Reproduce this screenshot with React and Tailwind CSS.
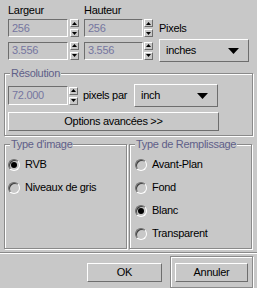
import React from 'react';

const raised = 'border border-t-white border-l-white border-b-[#6e6e6e] border-r-[#6e6e6e]';
const sunken = 'border border-t-[#6e6e6e] border-l-[#6e6e6e] border-b-white border-r-white';

function Field({ value, className }) {
  return (
    <div className={`${sunken} ${className} flex items-center pl-[3px] text-[#7676a0]`}>
      {value}
    </div>
  );
}

function Arrow({ up }) {
  return (
    <div className={`${raised} w-[9px] h-[8px] flex items-center justify-center`}>
      <svg width="5" height="3" viewBox="0 0 5 3">
        <polygon points={up ? '0,3 5,3 2.5,0' : '0,0 5,0 2.5,3'} fill="#000" />
      </svg>
    </div>
  );
}

function Spin({ className = '' }) {
  return (
    <div className={`flex flex-col gap-[2px] ${className}`}>
      <Arrow up />
      <Arrow />
    </div>
  );
}

function Select({ label, className }) {
  return (
    <div className={`${raised} ${className} flex items-center justify-between pl-[6px] pr-[9px]`}>
      <span>{label}</span>
      <svg width="11" height="6" viewBox="0 0 11 6">
        <polygon points="0,0 11,0 5.5,6" fill="#000" />
      </svg>
    </div>
  );
}

function Group({ title, className, children }) {
  return (
    <div className={`relative border border-[#8a8a8a] shadow-[inset_1px_1px_0_#fff,1px_1px_0_#fff] ${className}`}>
      <span className="absolute top-[-8px] left-[5px] px-[1px] bg-[#c8c8c8] leading-[14px] text-[#606088]">
        {title}
      </span>
      {children}
    </div>
  );
}

function Radio({ label, checked }) {
  return (
    <div className="h-[23px] flex items-center gap-[5px]">
      <div className="w-[12px] h-[12px] rounded-full border border-t-[#6e6e6e] border-l-[#6e6e6e] border-b-white border-r-white shadow-[inset_1px_1px_0_#404040] flex items-center justify-center">
        {checked && <div className="w-[6px] h-[6px] rounded-full bg-black" />}
      </div>
      <span>{label}</span>
    </div>
  );
}

function Button({ children, className }) {
  return (
    <div className={`${raised} ${className} flex items-center justify-center`}>
      {children}
    </div>
  );
}

export default function App() {
  return (
    <div
      className="w-[257px] h-[288px] bg-[#c8c8c8] text-black text-[11px] leading-[13px] tracking-[-0.3px] overflow-hidden"
      style={{ fontFamily: '"Liberation Sans", Arial, sans-serif' }}
    >
      {/* size */}
      <div className="pl-[8px] pt-[4px]">
        <div className="flex h-[13px]">
          <span className="w-[76px]">Largeur</span>
          <span>Hauteur</span>
        </div>
        <div className="flex items-center mt-[2px] h-[18px]">
          <Field value="256" className="w-[60px] h-[18px]" />
          <Spin className="ml-[2px]" />
          <Field value="256" className="w-[59px] h-[18px] ml-[5px]" />
          <Spin className="ml-[1px]" />
          <span className="ml-[6px]">Pixels</span>
        </div>
        <div className="flex items-center mt-[2px] h-[23px]">
          <Field value="3.556" className="w-[60px] h-[18px]" />
          <Spin className="ml-[2px]" />
          <Field value="3.556" className="w-[59px] h-[18px] ml-[5px]" />
          <Spin className="ml-[1px]" />
          <Select label="inches" className="w-[90px] h-[23px] ml-[6px]" />
        </div>
      </div>

      {/* resolution */}
      <Group title="Résolution" className="ml-[4px] w-[249px] mt-[11px] pt-[10px] pb-[4px] pl-[3px]">
        <div className="flex items-center h-[23px]">
          <Field value="72.000" className="w-[60px] h-[19px]" />
          <Spin className="ml-[1px]" />
          <span className="ml-[5px] w-[51px]">pixels par</span>
          <Select label="inch" className="w-[84px] h-[23px]" />
        </div>
        <Button className="w-[211px] h-[19px] mt-[5px]">Options avancées &gt;&gt;</Button>
      </Group>

      {/* types */}
      <div className="flex gap-[2px] ml-[4px] mt-[8px]">
        <Group title="Type d'image" className="w-[123px] h-[105px] pt-[8px] pl-[3px]">
          <Radio label="RVB" checked />
          <Radio label="Niveaux de gris" />
        </Group>
        <Group title="Type de Remplissage" className="w-[123px] h-[105px] pt-[8px] pl-[5px]">
          <Radio label="Avant-Plan" />
          <Radio label="Fond" />
          <Radio label="Blanc" checked />
          <Radio label="Transparent" />
        </Group>
      </div>

      {/* separator */}
      <div className="mt-[3px] h-[2px] border-t border-t-[#8a8a8a] border-b border-b-white" />

      {/* actions */}
      <div className="flex justify-end items-center pr-[4px] mt-[2px] gap-[8px]">
        <Button className="w-[75px] h-[19px]">OK</Button>
        <div className="w-[83px] h-[32px] border border-[#8a8a8a] shadow-[inset_1px_1px_0_#fff,1px_1px_0_#fff] flex items-center justify-center">
          <Button className="w-[73px] h-[19px]">Annuler</Button>
        </div>
      </div>
    </div>
  );
}
